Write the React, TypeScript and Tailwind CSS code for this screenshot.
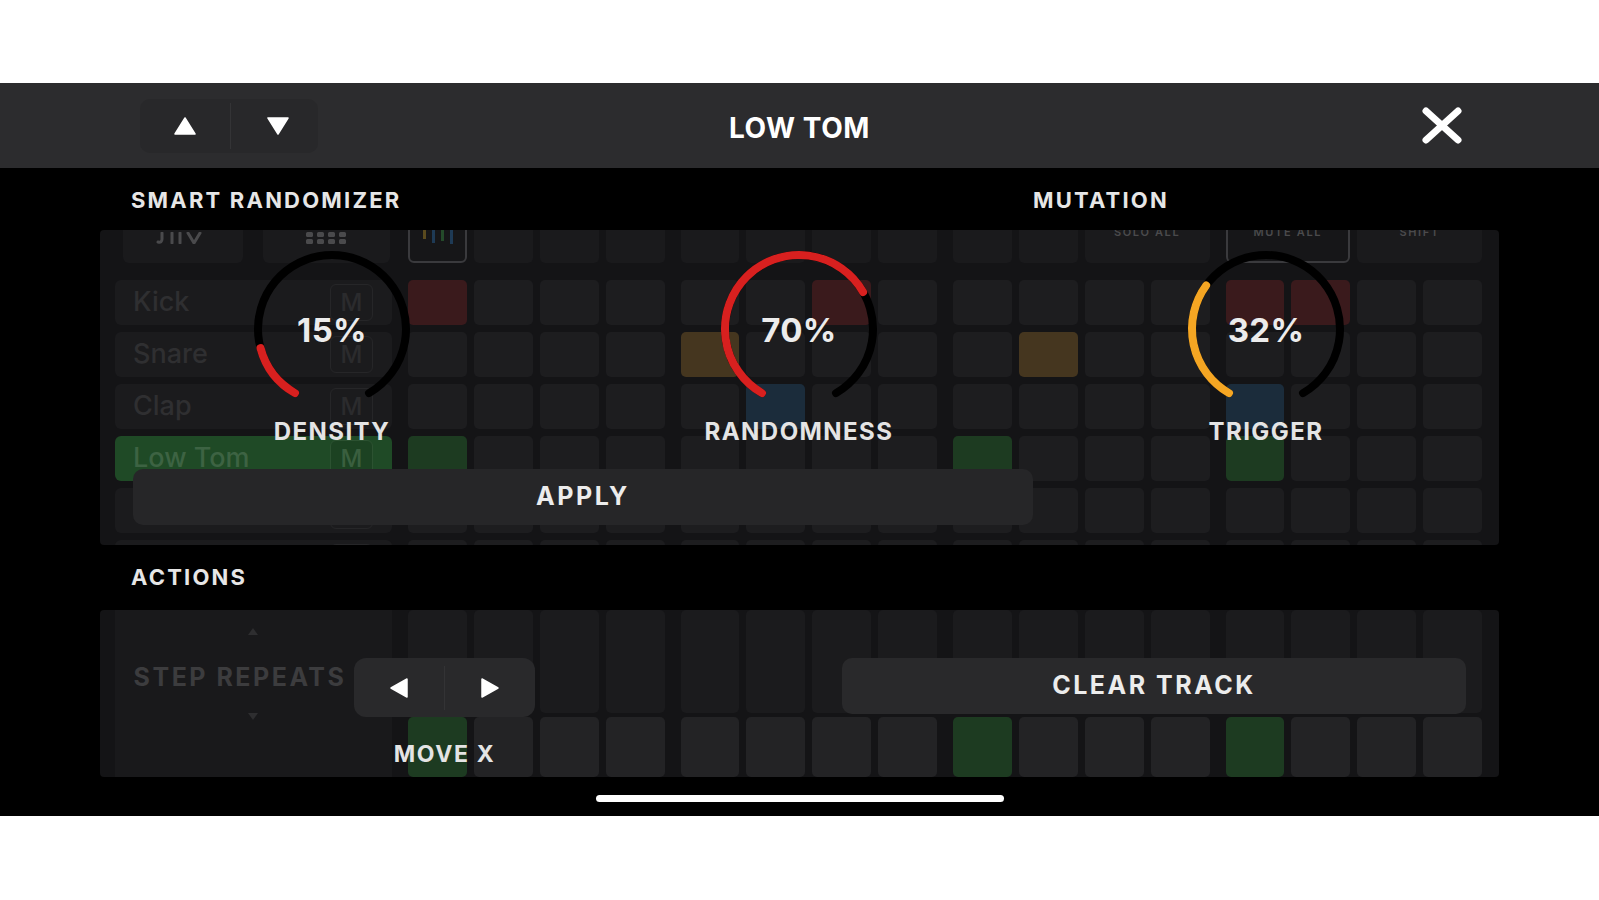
import React from "react";

type C = "n" | "r" | "o" | "b" | "g";

const cellColor: Record<C, string> = {
  n: "bg-[#1d1d1f]",
  r: "bg-[#3a1a1c]",
  o: "bg-[#45361f]",
  b: "bg-[#1b2c3b]",
  g: "bg-[#1d3b21]",
};

function row(spec: Partial<Record<number, C>>): C[] {
  const arr: C[] = [];
  for (let i = 1; i <= 16; i++) arr.push(spec[i] ?? "n");
  return arr;
}

function CellGroups({ colors, h, base }: { colors: C[]; h: string; base?: string }) {
  return (
    <div className="flex-1 flex gap-[16px]">
      {[0, 1, 2, 3].map((g) => (
        <div key={g} className="flex-1 grid grid-cols-4 gap-[7px]">
          {colors.slice(g * 4, g * 4 + 4).map((c, i) => (
            <div key={i} className={`${h} rounded-[5px] ${c === "n" && base ? base : cellColor[c]}`} />
          ))}
        </div>
      ))}
    </div>
  );
}

function TrackRow({ name, colors, active }: { name: string; colors: C[]; active?: boolean }) {
  return (
    <div className="flex gap-[16px] h-[45px]">
      <div
        className={`w-[277px] h-full rounded-[6px] flex items-center pl-[18px] pr-[19px] ${
          active ? "bg-[#1f4a26]" : "bg-[#1b1b1d]"
        }`}
      >
        <span className={`flex-1 text-[27px] font-medium ${active ? "text-[#3d6343]" : "text-[#2f2f31]"}`}>{name}</span>
        <div
          className={`w-[43px] h-[37px] rounded-[6px] border-[1.5px] flex items-center justify-center text-[24px] font-medium ${
            active ? "border-[#2c5231] text-[#3a5f3f] bg-[#1c4222]" : "border-[#262628] text-[#2b2b2d]"
          }`}
        >
          M
        </div>
      </div>
      <CellGroups colors={colors} h="h-[45px]" />
    </div>
  );
}

function HeaderGridRow() {
  return (
    <div className="flex gap-[16px] h-[50px]">
      <div className="w-[277px] h-full flex gap-[20px] pl-[8px]">
        <div className="w-[120px] h-full rounded-[6px] bg-[#1a1a1c] flex justify-center pt-[19px]">
          <svg width="54" height="12" viewBox="0 0 54 12" fill="none" stroke="#4a4a4c" strokeWidth="3" strokeLinecap="round">
            <path d="M6 1 V7 Q6 11 2 10" />
            <path d="M16 1 V11" />
            <path d="M24 1 V11" />
            <path d="M32 1 L38 11 L44 1" />
          </svg>
        </div>
        <div className="w-[127px] h-full rounded-[6px] bg-[#1a1a1c] flex justify-center pt-[18px]">
          <svg width="44" height="14" viewBox="0 0 44 14" fill="#4a4a4c">
            {[0, 1, 2, 3].map((i) => (
              <g key={i}>
                <rect x={i * 11 + 1} y="1" width="7" height="5" rx="1.5" />
                <rect x={i * 11 + 1} y="8" width="7" height="5" rx="1.5" />
              </g>
            ))}
          </svg>
        </div>
      </div>
      <div className="flex-1 flex gap-[16px]">
        <div className="flex-1 grid grid-cols-4 gap-[7px]">
          <div className="h-[50px] rounded-[6px] border-[2px] border-[#3a3a3d] bg-[#161618] flex items-start justify-center gap-[6px] pt-[10px] pl-[2px]">
            <div className="w-[3px] h-[14px] bg-[#5a4a1e]" />
            <div className="w-[3px] h-[14px] bg-[#1e3a55] mt-[4px]" />
            <div className="w-[3px] h-[14px] bg-[#244a2a] mt-[2px]" />
            <div className="w-[3px] h-[14px] bg-[#1e3a55] mt-[5px]" />
          </div>
          <div className="h-[50px] rounded-[5px] bg-[#1a1a1c]" />
          <div className="h-[50px] rounded-[5px] bg-[#1a1a1c]" />
          <div className="h-[50px] rounded-[5px] bg-[#1a1a1c]" />
        </div>
        <div className="flex-1 grid grid-cols-4 gap-[7px]">
          <div className="h-[50px] rounded-[5px] bg-[#1a1a1c]" />
          <div className="h-[50px] rounded-[5px] bg-[#1a1a1c]" />
          <div className="h-[50px] rounded-[5px] bg-[#1a1a1c]" />
          <div className="h-[50px] rounded-[5px] bg-[#1a1a1c]" />
        </div>
        <div className="flex-1 grid grid-cols-4 gap-[7px]">
          <div className="h-[50px] rounded-[5px] bg-[#1a1a1c]" />
          <div className="h-[50px] rounded-[5px] bg-[#1a1a1c]" />
          <div className="col-span-2 h-[50px] rounded-[6px] bg-[#1a1a1c] flex justify-center pt-[12px] text-[11px] leading-[14px] font-semibold tracking-[0.15em] text-[#4a4a4c]">
            SOLO ALL
          </div>
        </div>
        <div className="flex-1 grid grid-cols-4 gap-[7px]">
          <div className="col-span-2 h-[50px] rounded-[6px] border-[2px] border-[#3a3a3d] bg-[#161618] flex justify-center pt-[10px] text-[11px] leading-[14px] font-semibold tracking-[0.15em] text-[#4a4a4c]">
            MUTE ALL
          </div>
          <div className="col-span-2 h-[50px] rounded-[6px] bg-[#1a1a1c] flex justify-center pt-[12px] text-[11px] leading-[14px] font-semibold tracking-[0.15em] text-[#4a4a4c]">
            SHIFT
          </div>
        </div>
      </div>
    </div>
  );
}

function polar(cx: number, cy: number, r: number, deg: number) {
  const a = (deg * Math.PI) / 180;
  return [cx + r * Math.cos(a), cy + r * Math.sin(a)];
}

function arc(cx: number, cy: number, r: number, a0: number, a1: number) {
  const [x0, y0] = polar(cx, cy, r, a0);
  const [x1, y1] = polar(cx, cy, r, a1);
  const large = a1 - a0 > 180 ? 1 : 0;
  return `M ${x0.toFixed(2)} ${y0.toFixed(2)} A ${r} ${r} 0 ${large} 1 ${x1.toFixed(2)} ${y1.toFixed(2)}`;
}

function Knob({ value, label, color }: { value: number; label: string; color: string }) {
  const start = 120;
  const sweep = 300;
  const end = start + sweep * value;
  return (
    <div className="w-[200px] flex flex-col items-center">
      <div className="grid place-items-center w-[168px] h-[168px]">
        <svg width="168" height="168" viewBox="0 0 168 168" className="[grid-area:1/1]">
          <path d={arc(84, 84, 74, start, start + sweep)} stroke="#000" strokeWidth="8" fill="none" strokeLinecap="round" />
          <path d={arc(84, 84, 74, start, end)} stroke={color} strokeWidth="8" fill="none" strokeLinecap="round" />
        </svg>
        <span className="[grid-area:1/1] text-[33px] leading-[38px] font-bold tracking-[0.01em] text-[#ececec] mt-[2px]">
          {Math.round(value * 100)}%
        </span>
      </div>
      <div className="mt-[6px] text-[24px] leading-[26px] font-bold tracking-[0.06em] text-[#e4e4e4] whitespace-nowrap">
        {label}
      </div>
    </div>
  );
}

function Header() {
  return (
    <div className="h-[85px] bg-[#2c2c2e] grid grid-cols-[1fr_auto_1fr] items-center">
      <div className="pl-[140px]">
        <div className="w-[178px] h-[54px] rounded-[10px] bg-[#28282a] flex items-center">
          <div className="w-[90px] flex justify-center">
            <svg width="22" height="18" viewBox="0 0 22 18">
              <path d="M11 1 L21 17 L1 17 Z" fill="#fff" strokeLinejoin="round" stroke="#fff" strokeWidth="1.5" />
            </svg>
          </div>
          <div className="w-px h-[46px] bg-[#343436]" />
          <div className="flex-1 flex justify-center pl-[6px]">
            <svg width="22" height="18" viewBox="0 0 22 18">
              <path d="M1 1 L21 1 L11 17 Z" fill="#fff" strokeLinejoin="round" stroke="#fff" strokeWidth="1.5" />
            </svg>
          </div>
        </div>
      </div>
      <div className="pt-[5px] text-[28px] font-bold text-white tracking-[0.02em]">LOW TOM</div>
      <div className="flex justify-end pr-[137px]">
        <svg width="40" height="37" viewBox="0 0 40 37">
          <path d="M4 4 L36 33 M36 4 L4 33" stroke="#fff" strokeWidth="7" strokeLinecap="round" />
        </svg>
      </div>
    </div>
  );
}

function SmartPanel() {
  const rows: { name: string; colors: C[]; active?: boolean }[] = [
    { name: "Kick", colors: row({ 1: "r", 7: "r", 13: "r", 14: "r" }) },
    { name: "Snare", colors: row({ 5: "o", 10: "o" }) },
    { name: "Clap", colors: row({ 6: "b", 13: "b" }) },
    { name: "Low Tom", colors: row({ 1: "g", 9: "g", 13: "g" }), active: true },
    { name: "", colors: row({}) },
    { name: "", colors: row({}) },
  ];
  return (
    <div className="relative h-[315px] mt-[17px] rounded-[4px] bg-[#141416] overflow-hidden">
      <div className="flex flex-col pl-[15px] pr-[17px] mt-[-17px]">
        <HeaderGridRow />
        <div className="flex flex-col gap-[7px] mt-[17px]">
          {rows.map((r, i) => (
            <TrackRow key={i} name={r.name} colors={r.colors} active={r.active} />
          ))}
        </div>
      </div>
      <div className="absolute inset-0 flex">
        <div className="w-[933px] pl-[33px] flex flex-col">
          <div className="flex pt-[15px] pl-[99px] gap-[267px]">
            <Knob value={0.15} label="DENSITY" color="#d8201f" />
            <Knob value={0.7} label="RANDOMNESS" color="#d8201f" />
          </div>
          <div className="mt-[24px] h-[56px] w-[900px] rounded-[10px] bg-[#262628] flex items-center justify-center text-[25px] font-bold tracking-[0.1em] text-[#ececec]">
            APPLY
          </div>
        </div>
        <div className="flex-1 flex justify-center pt-[15px]">
          <Knob value={0.32} label="TRIGGER" color="#f5a623" />
        </div>
      </div>
    </div>
  );
}

function Caret({ up }: { up?: boolean }) {
  return (
    <svg width="10" height="7" viewBox="0 0 10 7">
      <path d={up ? "M5 0 L10 7 L0 7 Z" : "M0 0 L10 0 L5 7 Z"} fill="#2e2e30" />
    </svg>
  );
}

function ActionsPanel() {
  return (
    <div className="relative h-[167px] mt-[20px] rounded-[4px] bg-[#141416] overflow-hidden">
      <div className="flex h-full pl-[15px] pr-[17px] gap-[16px]">
        <div className="w-[277px] h-full bg-[#19191b]" />
        <div className="flex-1 flex flex-col gap-[4px]">
          <CellGroups colors={row({})} h="h-[103px]" base="bg-[#1b1b1d]" />
          <CellGroups colors={row({ 1: "g", 9: "g", 13: "g" })} h="h-[60px]" base="bg-[#232325]" />
        </div>
      </div>
      <div className="absolute inset-0 flex items-start pl-[34px]">
        <div className="w-[212px] flex flex-col items-center pt-[18px]">
          <div className="ml-[26px]">
            <Caret up />
          </div>
          <div className="mt-[29px] text-[25px] leading-[26px] font-bold tracking-[0.1em] text-[#3c3c3e] whitespace-nowrap">
            STEP REPEATS
          </div>
          <div className="mt-[23px] ml-[26px]">
            <Caret />
          </div>
        </div>
        <div className="ml-[8px] w-[181px] flex flex-col items-center pt-[48px]">
          <div className="w-full h-[59px] rounded-[12px] bg-[#29292b] flex items-center">
            <div className="w-[90px] flex justify-center">
              <svg width="18" height="20" viewBox="0 0 18 20">
                <path d="M1 10 L17 1 L17 19 Z" fill="#fff" stroke="#fff" strokeWidth="1.5" strokeLinejoin="round" />
              </svg>
            </div>
            <div className="w-px h-[44px] bg-[#333335]" />
            <div className="flex-1 flex justify-center">
              <svg width="18" height="20" viewBox="0 0 18 20">
                <path d="M17 10 L1 1 L1 19 Z" fill="#fff" stroke="#fff" strokeWidth="1.5" strokeLinejoin="round" />
              </svg>
            </div>
          </div>
          <div className="mt-[24px] text-[23px] leading-[26px] font-bold tracking-[0.07em] text-[#e4e4e4] whitespace-nowrap">
            MOVE X
          </div>
        </div>
        <div className="ml-[307px] mt-[48px] w-[624px] h-[56px] rounded-[10px] bg-[#29292b] flex items-center justify-center text-[25px] font-bold tracking-[0.1em] text-[#ececec]">
          CLEAR TRACK
        </div>
      </div>
    </div>
  );
}

export default function App() {
  return (
    <div className="w-[1599px] h-[900px] bg-white overflow-hidden font-['Inter',sans-serif]">
      <div className="h-[83px]" />
      <div className="h-[733px] bg-black flex flex-col">
        <Header />
        <div className="flex flex-col px-[100px]">
          <div className="flex pt-[19px] text-[22px] leading-[26px] font-bold tracking-[0.1em] text-[#e6e6e6]">
            <div className="w-[933px] pl-[31px]">SMART RANDOMIZER</div>
            <div>MUTATION</div>
          </div>
          <SmartPanel />
          <div className="mt-[19px] pl-[31px] text-[22px] leading-[26px] font-bold tracking-[0.1em] text-[#e6e6e6]">ACTIONS</div>
          <ActionsPanel />
          <div className="mt-[18px] mx-auto w-[408px] h-[7px] rounded-full bg-white" />
        </div>
      </div>
    </div>
  );
}
